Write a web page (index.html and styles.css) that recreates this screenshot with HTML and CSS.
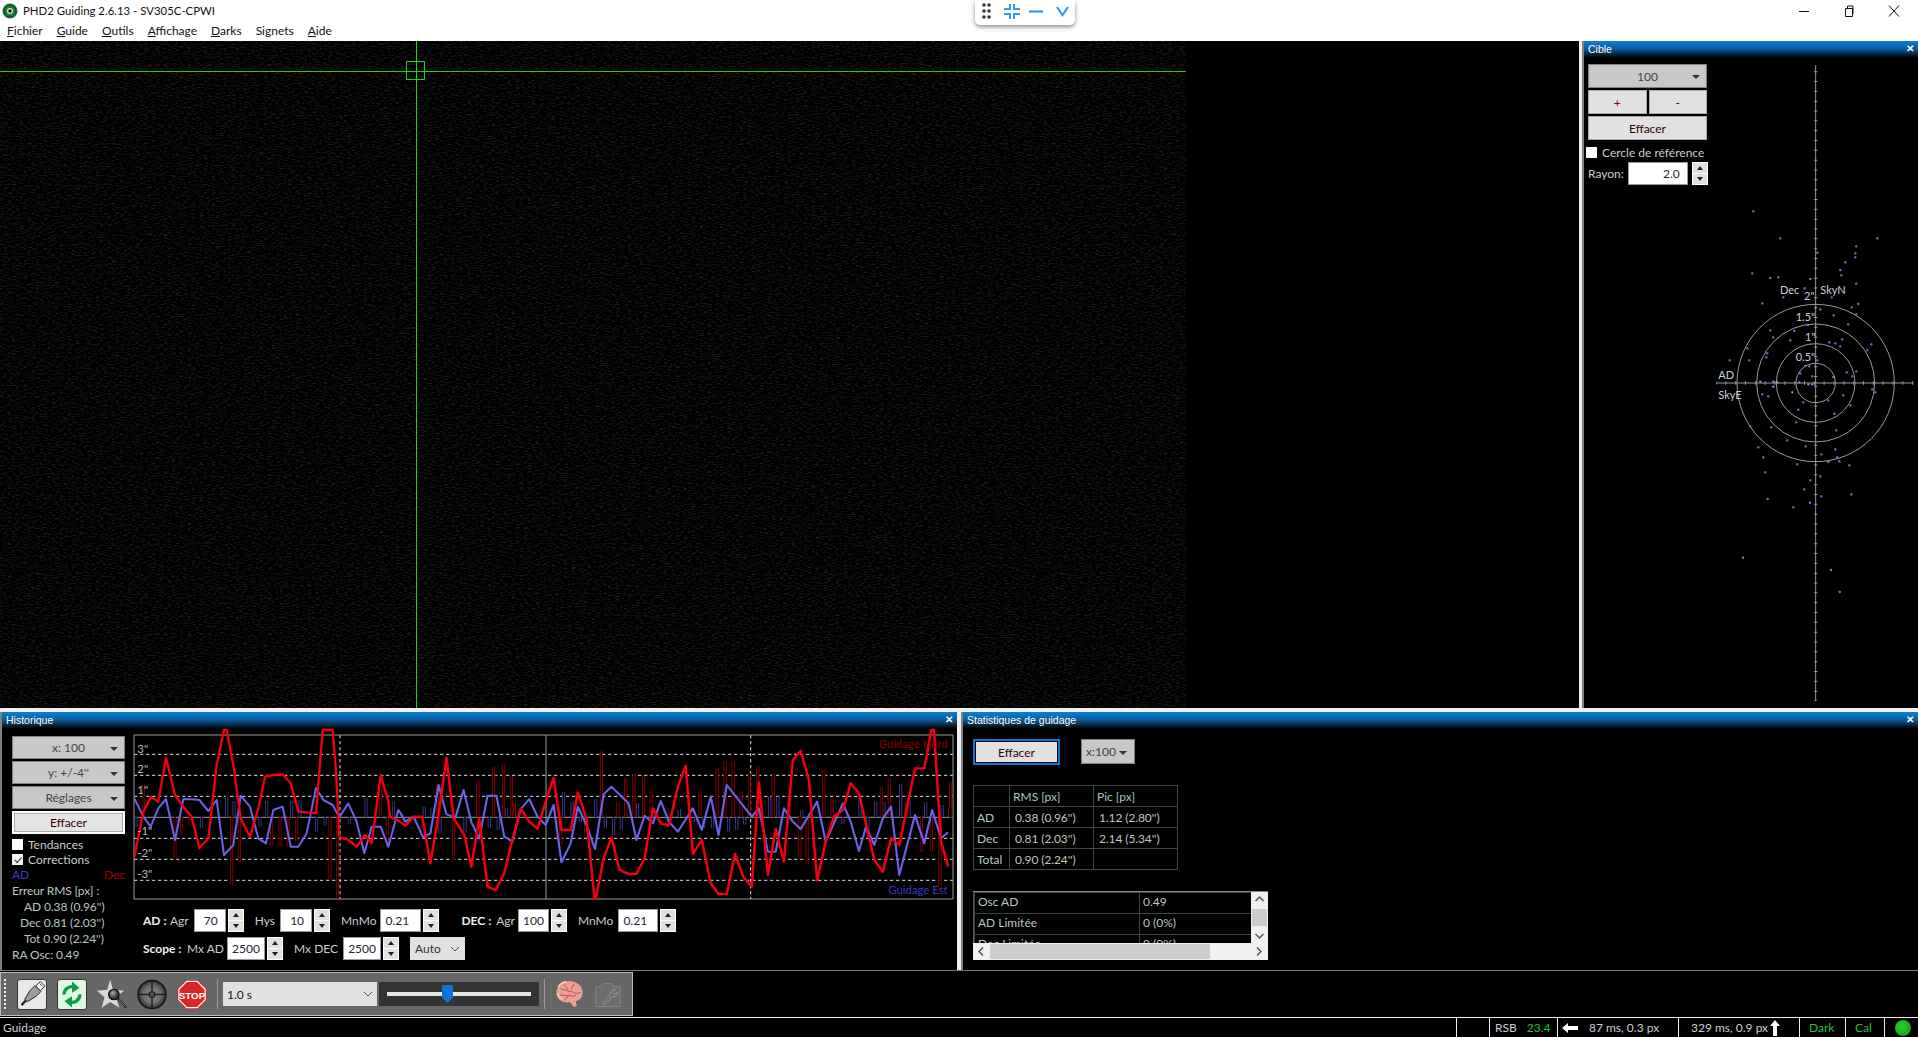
FILE: index.html
```html
<!DOCTYPE html>
<html lang="fr">
<head>
<meta charset="utf-8">
<title>PHD2 Guiding</title>
<link rel="stylesheet" href="styles.css">
</head>
<body>
<div class="app">
  <header class="titlebar">
    <svg class="app-icon" viewBox="0 0 16 16"><circle cx="8" cy="8" r="7.500" fill="#1f7a3a"/><circle cx="8" cy="8" r="6" fill="none" stroke="#0c3d1c"/><circle cx="8" cy="8" r="3" fill="#d8e8d0"/><circle cx="8" cy="8" r="1.700" fill="#111"/></svg>
    <span class="app-title">PHD2 Guiding 2.6.13 - SV305C-CPWI</span>
    <div class="winctl">
      <svg viewBox="0 0 12 12"><path d="M1 6.500h10" stroke="#111"/></svg>
      <svg viewBox="0 0 12 12"><path d="M2.500 3.500h7v8h-7zM4.500 3.500V1h5.500v8h-1" fill="none" stroke="#111"/></svg>
      <svg viewBox="0 0 12 12"><path d="M1 .5l10 11M11 .5l-10 11" fill="none" stroke="#111"/></svg>
    </div>
  </header>
  <div class="floatbar">
    <svg viewBox="0 0 100 24">
      <g fill="#333"><circle cx="9" cy="5" r="1.800"/><circle cx="14" cy="5" r="1.800"/><circle cx="9" cy="11" r="1.800"/><circle cx="14" cy="11" r="1.800"/><circle cx="9" cy="17" r="1.800"/><circle cx="14" cy="17" r="1.800"/></g>
      <path d="M35 4v5h-6M39 4v5h6M35 19v-5h-6M39 19v-5h6" fill="none" stroke="#2f9bf0" stroke-width="2"/>
      <path d="M54 11.500h14" stroke="#2f9bf0" stroke-width="2.200"/>
      <path d="M82 7l5.500 8 5.500-8" fill="none" stroke="#2f9bf0" stroke-width="2.200"/>
    </svg>
  </div>
  <nav class="menubar">
    <span><u>F</u>ichier</span><span><u>G</u>uide</span><span><u>O</u>utils</span><span><u>A</u>ffichage</span><span><u>D</u>arks</span><span>Signets</span><span><u>A</u>ide</span>
  </nav>

  <div class="upper">
    <main class="camera">
      <div class="frame">
        <svg class="crosshair" viewBox="0 0 1186 667">
          <defs>
            <filter id="grain" x="0" y="0" width="100%" height="100%" color-interpolation-filters="sRGB">
              <feTurbulence type="fractalNoise" baseFrequency="0.25 0.9" numOctaves="2" seed="7"/>
              <feColorMatrix type="matrix" values="0.34 0 0 0 -0.15  0.31 0 0 0 -0.14  0.31 0 0 0 -0.14  0 0 0 0 1"/>
            </filter>
          </defs>
          <rect width="1186" height="667" filter="url(#grain)"/>
          <path d="M0 30.500H1186M416.500 0V667M406.500 20.500h18v18h-18z" fill="none" stroke="#19d419"/>
        </svg>
      </div>
    </main>
    <section class="pane target">
      <div class="pane-title"><span>Cible</span><b>✕</b></div>
      <div class="target-body">
        <div class="target-ctl">
          <div class="btn drop tall"><span>100</span></div>
          <div class="btn-row"><div class="btn plain"><span class="plus">+</span></div><div class="btn plain"><span>-</span></div></div>
          <div class="btn plain"><span>Effacer</span></div>
          <label class="chk-row"><i class="chk"></i>Cercle de référence</label>
          <div class="rayon"><span>Rayon:</span><div class="field wide">2.0</div><div class="spin"><i></i><i></i></div></div>
        </div>
        <svg class="target-plot" viewBox="84 -606 630 1950">
          <g stroke="#9a9a9a" fill="none" stroke-width="3">
            <path d="M407 -585V1323M108 369H700"/>
            <circle cx="407" cy="369" r="59"/><circle cx="407" cy="369" r="118"/><circle cx="407" cy="369" r="177"/><circle cx="407" cy="369" r="236"/>
          </g>
          <path class="ticks" d="M407 1323V-585M108 369H700"/>
          <path class="dots" d="M220 -146h0M301 -65h0M592 -65h0M529 -41h0M526 -20h0M526 -8h0M496 7h0M481 30h0M484 46h0M412 -22h0M217 40h0M271 54h0M295 52h0M391 57h0M529 71h0M374 85h0M310 112h0M455 112h0M247 130h0M515 142h0M535 132h0M421 148h0M529 163h0M461 166h0M505 193h0M383 195h0M271 211h0M343 213h0M280 232h0M331 241h0M487 238h0M448 247h0M466 250h0M481 259h0M574 253h0M202 265h0M562 271h0M262 280h0M259 292h0M208 301h0M149 301h0M412 301h0M376 318h0M388 319h0M500 337h0M529 334h0M361 340h0M397 349h0M517 349h0M460 351h0M241 365h0M280 365h0M292 367h0M280 380h0M358 367h0M385 373h0M397 373h0M577 388h0M586 397h0M337 397h0M247 403h0M265 409h0M490 406h0M445 421h0M370 427h0M511 436h0M355 449h0M463 461h0M349 487h0M211 499h0M274 502h0M469 511h0M322 541h0M377 559h0M235 562h0M466 568h0M424 583h0M250 592h0M472 592h0M478 604h0M445 606h0M352 613h0M508 616h0M256 637h0M421 649h0M391 661h0M373 688h0M514 703h0M424 709h0M263 717h0M189 893h0M453 930h0M479 996h0M390 728h0M340 742h0"/>
          <path class="dots-in" d="M220 -146h0M301 -65h0M592 -65h0M529 -41h0M526 -20h0M526 -8h0M496 7h0M481 30h0M484 46h0M412 -22h0M217 40h0M271 54h0M295 52h0M391 57h0M529 71h0M374 85h0M310 112h0M455 112h0M247 130h0M515 142h0M535 132h0M421 148h0M529 163h0M461 166h0M505 193h0M383 195h0M271 211h0M343 213h0M280 232h0M331 241h0M487 238h0M448 247h0M466 250h0M481 259h0M574 253h0M202 265h0M562 271h0M262 280h0M259 292h0M208 301h0M149 301h0M412 301h0M376 318h0M388 319h0M500 337h0M529 334h0M361 340h0M397 349h0M517 349h0M460 351h0M577 388h0M586 397h0M247 403h0M265 409h0M490 406h0M445 421h0M370 427h0M511 436h0M355 449h0M463 461h0M349 487h0M211 499h0M274 502h0M469 511h0M322 541h0M377 559h0M235 562h0M466 568h0M424 583h0M250 592h0M472 592h0M478 604h0M445 606h0M352 613h0M508 616h0M256 637h0M421 649h0M391 661h0M373 688h0M514 703h0M424 709h0M263 717h0M189 893h0M453 930h0M479 996h0M390 728h0M340 742h0"/>
          <g class="tlabel">
            <text x="115" y="356">AD</text><text x="115" y="416">SkyE</text><text x="300" y="101">Dec</text><text x="421" y="101">SkyN</text>
            <text x="372" y="121">2"</text><text x="347" y="183">1.5"</text><text x="375" y="243">1"</text><text x="347" y="302">0.5"</text>
          </g>
        </svg>
      </div>
    </section>
  </div>

  <div class="lower">
    <section class="pane history">
      <div class="pane-title"><span>Historique</span><b>✕</b></div>
      <div class="history-body">
        <div class="hist-left">
          <div class="btn drop"><span>x: 100</span></div>
          <div class="btn drop"><span>y: +/-4''</span></div>
          <div class="btn drop"><span>Réglages</span></div>
          <div class="btn plain bright"><span>Effacer</span></div>
          <label class="chk-row"><i class="chk"></i>Tendances</label>
          <label class="chk-row"><i class="chk on"></i>Corrections</label>
          <div class="ad-dec"><span class="c-blue">AD</span><span class="c-red">Dec</span></div>
          <div class="stat-line">Erreur RMS [px] :</div>
          <div class="stat-line ind-ad">AD&nbsp;0.38 (0.96'')</div>
          <div class="stat-line ind-dec">Dec&nbsp;0.81 (2.03'')</div>
          <div class="stat-line ind-ad">Tot&nbsp;0.90 (2.24'')</div>
          <div class="stat-line">RA Osc: 0.49</div>
        </div>
        <div class="hist-right">
          <svg class="plot" viewBox="399 69 2466 516">
            <defs>
              <path id="barsR1" d="M430 337V240M525 337V465M545 337V385M570 337V360M695 337V540M718 337V470M815 337V420M840 337V425M865 337V425M890 337V410M990 337V525M1013 337V580M1142 337V240M1162 337V430"/>
              <path id="barsB1" d="M408 337V365M605 337V368M680 337V272M702 337V288M780 337V365M800 337V288M875 337V288M900 337V285M950 337V380M975 337V362M1048 337V358M1098 337V278M1180 337V290"/>
              <path id="barsR2" d="M105 337V238M150 337V465M218 337V225M262 337V185M290 337V178M312 337V215M320 337V292M450 337V420M520 337V385M564 337V135M610 337V292M632 337V220M655 337V210M682 337V212M703 337V252M840 337V258M888 337V190M910 337V168M933 337V168M955 337V258M978 337V205M1002 337V183M1045 337V210M1090 337V280M1120 337V462M1140 337V480M1187 337V195M1210 337V278M1348 337V245M1370 337V218M1418 337V278M1460 337V440M1488 337V440M1512 337V550M1542 337V230"/>
              <path id="barsB2" d="M68 337V305M90 337V308M112 337V385M182 337V385M250 337V368M275 337V375M298 337V308M458 337V262M482 337V290M505 337V350M548 337V283M575 337V370M598 337V390M620 337V375M665 337V295M782 337V312M828 337V350M850 337V370M875 337V370M920 337V380M943 337V375M965 337V358M1035 337V275M1058 337V275M1125 337V315M1240 337V358M1288 337V280M1310 337V385M1332 337V290M1355 337V290M1402 337V238M1425 337V288M1472 337V292M1518 337V300M1540 337V310"/>
            </defs>
            <g class="grid-dash"><path d="M402 148H2859M402 211H2859M402 274H2859M402 400H2859M402 463H2859M402 526H2859M1020 90V582M2252 90V582"/></g>
            <path class="grid-solid" d="M402 337H2859M1638 90V582M402 90H2859V582H402Z"/>
            <g class="bar-blue"><use href="#barsB1"/><use href="#barsB2" transform="translate(1200 0) scale(1.0714 1)"/></g>
            <g class="bar-red"><use href="#barsR1"/><use href="#barsR2" transform="translate(1200 0) scale(1.0714 1)"/></g>
            <g class="bar-in"><use href="#barsB1"/><use href="#barsB2" transform="translate(1200 0) scale(1.0714 1)"/><use href="#barsR1"/><use href="#barsR2" transform="translate(1200 0) scale(1.0714 1)"/></g>
            <g class="line-blue">
              <polyline points="403,280 430,335 452,365 475,310 498,282 525,405 550,282 575,283 598,285 625,318 650,285 672,450 700,420 722,272 750,305 775,400 798,415 820,315 848,305 872,425 895,425 920,385 948,248 970,285 998,300 1018,337 1045,295 1070,350 1093,445 1115,365 1142,365 1165,425 1195,315 1200,322"/>
              <polyline transform="translate(1200 0) scale(1.0714 1)" points="0,322 15,350 38,335 65,398 85,385 108,240 130,328 155,338 178,255 200,352 222,400 245,272 270,272 292,395 315,410 338,312 362,282 385,335 408,360 430,300 452,472 478,415 498,305 522,360 546,432 570,268 592,245 640,295 662,405 685,332 708,355 730,288 753,350 778,380 820,310 845,375 870,275 892,390 915,240 985,335 1005,310 1030,440 1052,440 1075,310 1100,350 1122,372 1168,290 1192,410 1240,295 1262,350 1285,438 1305,365 1328,420 1352,340 1375,305 1398,510 1442,330 1468,415 1490,315 1515,400 1535,382"/>
            </g>
            <g class="line-red">
              <polyline points="403,455 430,320 453,275 475,290 498,158 525,270 550,305 575,335 598,430 625,400 650,180 672,75 680,75 700,180 722,340 750,395 775,310 795,215 820,210 848,208 872,235 895,320 920,322 948,325 968,75 998,75 1008,200 1018,397 1045,405 1070,425 1095,390 1115,415 1142,210 1165,290 1170,335 1200,350"/>
              <polyline transform="translate(1200 0) scale(1.0714 1)" points="0,350 15,362 38,335 62,335 85,475 108,330 130,158 150,340 180,390 200,485 222,340 245,545 268,555 292,505 318,390 338,310 362,350 385,372 408,290 430,218 452,375 478,375 498,262 522,340 546,595 570,460 592,398 615,495 640,507 662,507 685,460 708,310 730,355 753,362 778,245 800,182 820,447 845,405 870,535 892,567 915,567 938,447 962,517 985,545 1005,232 1030,510 1052,372 1075,470 1100,165 1122,138 1145,225 1168,527 1192,410 1215,335 1240,315 1262,235 1285,265 1328,465 1352,500 1375,400 1398,420 1442,190 1468,190 1488,75 1495,75 1515,410 1535,485"/>
            </g>
            <g class="plabel">
              <text x="412" y="143">3"</text><text x="412" y="205">2"</text><text x="412" y="268">1"</text><text x="412" y="390">-1"</text><text x="412" y="456">-2"</text><text x="412" y="520">-3"</text>
              <text class="gn" x="2843" y="130">Guidage Nord</text><text class="ge" x="2843" y="568">Guidage Est</text>
            </g>
          </svg>
          <div class="ctl-row r1">
            <b class="lbl-ad">AD :</b><span class="lbl-agr">Agr</span><div class="field">70</div><div class="spin"><i></i><i></i></div>
            <span class="lbl-hys">Hys</span><div class="field">10</div><div class="spin"><i></i><i></i></div>
            <span class="lbl-mn">MnMo</span><div class="field left w41">0.21</div><div class="spin"><i></i><i></i></div>
            <b class="lbl-dec">DEC :</b><span class="lbl-agr2">Agr</span><div class="field w31">100</div><div class="spin"><i></i><i></i></div>
            <span class="lbl-mn2">MnMo</span><div class="field left w40">0.21</div><div class="spin"><i></i><i></i></div>
          </div>
          <div class="ctl-row r2">
            <b class="lbl-sc">Scope :</b><span class="lbl-mx">Mx AD</span><div class="field c38">2500</div><div class="spin"><i></i><i></i></div>
            <span class="lbl-mxd">Mx DEC</span><div class="field c38">2500</div><div class="spin"><i></i><i></i></div>
            <div class="auto"><span>Auto</span><svg viewBox="0 0 10 6"><path d="M1 1l4 4 4-4" fill="none" stroke="#555"/></svg></div>
          </div>
        </div>
      </div>
    </section>
    <section class="pane stats">
      <div class="pane-title"><span>Statistiques de guidage</span><b>✕</b></div>
      <div class="stats-body">
        <div class="stats-top">
          <div class="btn plain focus"><span>Effacer</span></div>
          <div class="btn drop small"><span>x:100</span></div>
        </div>
        <table class="grid g1">
          <tr class="head"><td></td><td>RMS [px]</td><td>Pic [px]</td></tr>
          <tr><td>AD</td><td class="n">0.38 (0.96'')</td><td class="n">1.12 (2.80'')</td></tr>
          <tr><td>Dec</td><td class="n">0.81 (2.03'')</td><td class="n">2.14 (5.34'')</td></tr>
          <tr><td>Total</td><td class="n">0.90 (2.24'')</td><td></td></tr>
        </table>
        <div class="scrollbox">
          <div class="sb-main">
            <div class="sb-view">
              <table class="grid g2">
                <tr><td>Osc AD</td><td>0.49</td></tr>
                <tr><td>AD Limitée</td><td>0 (0%)</td></tr>
                <tr><td>Dec Limitée</td><td>0 (0%)</td></tr>
              </table>
            </div>
            <div class="vbar"><svg viewBox="0 0 17 51"><path d="M4.500 9l4-4 4 4M4.500 42l4 4 4-4" fill="none" stroke="#555" stroke-width="1.500"/><rect x="1" y="17" width="15" height="17" fill="#cdcdcd"/></svg></div>
          </div>
          <div class="hbar"><svg viewBox="0 0 295 17"><path d="M10 4.500l-4 4 4 4M284 4.500l4 4-4 4" fill="none" stroke="#555" stroke-width="1.500"/><rect x="17" y="1" width="220" height="15" fill="#cdcdcd"/></svg></div>
        </div>
      </div>
    </section>
  </div>

  <div class="toolrow">
    <div class="toolbar">
      <i class="grip"></i>
      <div class="tool on-light">
        <svg viewBox="0 0 30 30"><g transform="rotate(45 15 15)"><rect x="11.500" y="-1" width="7" height="7" fill="#f4f4f4" stroke="#222"/><path d="M13 1h1.500M15.500 1H17" stroke="#222"/><path d="M10.500 6h9v7l-2.500 11h-4l-2.500-11z" fill="#9c9c9c" stroke="#222"/><path d="M15 24v7" stroke="#222" stroke-width="2.500"/></g></svg>
      </div>
      <div class="tool on-green">
        <svg viewBox="0 0 30 30"><g fill="none" stroke="#109a4a" stroke-width="3.600"><path d="M6.500 15a8.500 8.500 0 0 1 11-8"/><path d="M23.500 15a8.500 8.500 0 0 1-11 8"/></g><g fill="#109a4a"><path d="M15 1l8 7-8 5zM15 29l-8-7 8-5z"/></g></svg>
      </div>
      <div class="tool">
        <svg viewBox="0 0 32 32"><path d="M14 0l3 11 12 1-9 7 4 11-10-6-9 6 3-11-8-7 11-1z" fill="#d8d8d8"/><defs><radialGradient id="lens" cx=".4" cy=".35"><stop offset="0" stop-color="#aaa"/><stop offset="1" stop-color="#333"/></radialGradient></defs><circle cx="18" cy="16" r="5.500" fill="url(#lens)" stroke="#111" stroke-width="1.500"/><path d="M22 20l9 10" stroke="#111" stroke-width="2"/><path d="M23 21l7 8" stroke="#ccc" stroke-width=".7"/></svg>
      </div>
      <div class="tool">
        <svg viewBox="0 0 32 32"><defs><radialGradient id="scope"><stop offset="0" stop-color="#8a8a8a"/><stop offset=".65" stop-color="#6a6a6a"/><stop offset="1" stop-color="#2e2e2e"/></radialGradient></defs><circle cx="16" cy="16" r="15" fill="url(#scope)" stroke="#111" stroke-width="1.500"/><path d="M16 1v30M1 16h30" stroke="#1c1c1c" stroke-width="1.400"/><circle cx="16" cy="16" r="3" fill="#555" stroke="#1c1c1c" stroke-width="1.200"/></svg>
      </div>
      <div class="tool stop">
        <svg viewBox="0 0 32 32"><defs><linearGradient id="stopg" x1="0" y1="0" x2="1" y2="1"><stop offset="0" stop-color="#c8282a"/><stop offset="1" stop-color="#e8261c"/></linearGradient></defs><path d="M10 .5h12l9.500 9.500v12L22 31.500H10L.5 22V10z" fill="url(#stopg)"/><path d="M10.500 2h11l8.500 8.500v11L21.500 30h-11L2 21.500v-11z" fill="none" stroke="#fff" stroke-width="1.200"/><text x="16" y="20.500" class="stop-text">STOP</text></svg>
      </div>
      <i class="tsep"></i>
      <div class="exposure"><span>1.0 s</span><svg viewBox="0 0 10 6"><path d="M1 1l4 4 4-4" fill="none" stroke="#555"/></svg></div>
      <div class="slider"><i class="thumb"></i></div>
      <i class="tsep"></i>
      <div class="tool brain">
        <svg viewBox="0 0 32 32"><path d="M3 14C3 7 9 2 16 2s14 4 14 12c0 5-3 8-7 9l1 5-3 1-4-5C9 25 3 21 3 14z" fill="#ec9f92"/><path d="M7 10c3 2 5 0 7 2s5 0 7 2 5 0 7 0M6 17c3-2 5 1 8 0s5 2 9 0M11 5c1 3 3 3 4 6M21 5c-1 3-2 4-3 6M12 22c0-3 3-3 4-5" fill="none" stroke="#b8524a" stroke-width="1"/><path d="M5 8c2-3 5-5 8-5M4 15c1 3 3 5 5 6" fill="none" stroke="#fbe0d8" stroke-width="1.200"/></svg>
      </div>
      <div class="tool cam">
        <svg viewBox="0 0 30 30"><path d="M2 7h5l3-4h9l2 4h7v21H2z" fill="#6c6c6c" stroke="#888"/><path d="M9 24l9-9c-1-3 1-6 5-5l-3 3 2 2 3-3c1 4-2 6-5 5l-9 9z" fill="none" stroke="#999"/></svg>
      </div>
    </div>
  </div>

  <footer class="status">
    <span class="st-msg">Guidage</span>
    <div class="st-cell c33"></div>
    <div class="st-cell c68"><span>RSB</span><span class="green">23.4</span></div>
    <div class="st-cell c121"><svg class="arrow-l" viewBox="0 0 16 10"><path d="M0 5l6-5v3h10v4H6v3z" fill="#fff"/></svg><span>87 ms, 0.3 px</span></div>
    <div class="st-cell c121 r"><span>329 ms, 0.9 px</span><svg class="arrow-u" viewBox="0 0 10 16"><path d="M5 0l5 6H7v10H3V6H0z" fill="#fff"/></svg></div>
    <div class="st-cell c46 green">Dark</div>
    <div class="st-cell c39 green">Cal</div>
    <div class="st-cell led"><i></i></div>
  </footer>
</div>
</body>
</html>
```

FILE: styles.css
```css
* { box-sizing: border-box; }
html, body { margin: 0; height: 100%; overflow: hidden; }
body { background: #000; color: #ccc; font: 12px "Lato", "Liberation Sans", sans-serif; }
.app { position: relative; display: flex; flex-direction: column; width: 1918px; height: 1037px; }

.titlebar { display: flex; align-items: center; height: 21px; background: #fff; color: #111; padding-left: 2px; flex: none; }
.app-icon { width: 16px; height: 16px; flex: none; }
.app-title { margin-left: 5px; font-size: 11.400px; }
.winctl { margin-left: auto; display: flex; gap: 33px; padding-right: 18px; }
.winctl svg { width: 12px; height: 12px; }
.floatbar { position: absolute; left: 975px; top: 0; width: 100px; height: 25px; background: #fff; border-radius: 0 0 5px 5px; box-shadow: 0 2px 4px rgba(0,0,0,.45); }
.floatbar svg { display: block; width: 100px; height: 24px; }
.menubar { display: flex; gap: 14px; height: 20px; padding: 2px 0 0 7px; background: #fff; color: #111; flex: none; font-size: 12px; }

.upper { display: flex; height: 667px; background: #f0f0f0; flex: none; }
.camera { width: 1579px; background: #000; flex: none; }
.frame { width: 1186px; height: 667px; background: #000; }
.crosshair { display: block; width: 1186px; height: 667px; }

.pane { background: #000; display: flex; flex-direction: column; min-width: 0; }
.pane-title { display: flex; justify-content: space-between; align-items: center; height: 17px; flex: none; padding: 0 4px 2px 4px; color: #fff; font: 10.500px "Liberation Sans", sans-serif; background: linear-gradient(#0b7fd6, #0a5c9c 45%, #000); }
.pane-title b { font-size: 10px; font-weight: 700; }

.target { width: 336px; margin-left: 3px; border-left: 2px solid #808080; }
.target-body { display: flex; flex: 1; }
.target-ctl { width: 119px; margin: 6px 1px 0 4px; flex: none; display: flex; flex-direction: column; gap: 2px; }
.target-ctl .btn { height: 24px; }
.target-plot { display: block; width: 210px; height: 650px; flex: none; }
.ticks { stroke: #9a9a9a; stroke-width: 10; fill: none; stroke-dasharray: 3 26.500; stroke-dashoffset: 1.500; }
.dots { stroke: #9090ff; stroke-width: 7; stroke-linecap: round; fill: none; }
.dots-in { stroke: #000; stroke-width: 2; stroke-linecap: round; fill: none; }
.tlabel text { fill: #c6d0da; font: 33px "Lato", sans-serif; }

.btn { display: flex; align-items: center; justify-content: center; height: 23px; position: relative; color: #333; font-size: 12px; }
.btn.drop { background: #c8c8c8; border: 1px solid #808080; color: #444; }
.btn.drop::after { content: ""; position: absolute; right: 6px; top: 10px; border: 4px solid transparent; border-top: 4px solid #333; }
.btn.plain { background: #e1e1e1; border: 1px solid #aaa; color: #300; }
.btn-row { display: flex; gap: 2px; }
.btn-row .btn { flex: 1; }
.plus { color: #800; }
.chk-row { display: flex; align-items: center; gap: 5px; font-size: 12px; color: #c6d0d0; height: 15px; }
.target-ctl .chk-row { margin-top: 3px; }
.chk { width: 11px; height: 11px; background: #fff; flex: none; margin-left: -2px; }
.chk.on { background: #f0f0f0; position: relative; }
.chk.on::after { content: ""; position: absolute; left: 2px; top: 1px; width: 6px; height: 3px; border-left: 1px solid #333; border-bottom: 1px solid #333; transform: rotate(-45deg) translate(-1px, 2px); }
.rayon { display: flex; align-items: center; margin-top: 0; gap: 2px; }
.rayon > span { width: 39px; margin-right: 2px; }
.field { display: flex; align-items: center; justify-content: flex-end; width: 32px; height: 23px; padding: 0 7px 0 2px; background: #fff; border: 1px solid #999; color: #223; font-size: 12px; flex: none; }
.field.wide { width: 60px; }
.field.left { justify-content: flex-start; width: 38px; padding-left: 4px; }
.field.w41 { width: 41px; }
.field.w40 { width: 40px; }
.field.w31 { width: 31px; padding-right: 4px; }
.field.c38 { width: 38px; justify-content: center; padding: 0; }
.spin { width: 16px; height: 23px; display: flex; flex-direction: column; gap: 1px; flex: none; margin-left: 2px; background: #fff; padding: 1px; }
.spin i { flex: 1; background: #e1e1e1; display: flex; align-items: center; justify-content: center; }
.spin i::before { content: ""; border: 3px solid transparent; border-bottom: 4px solid #222; border-top: 0; }
.spin i + i::before { border-top: 4px solid #222; border-bottom: 0; }

.lower { display: flex; height: 262px; padding-top: 4px; background: #f0f0f0; flex: none; }
.history { width: 957px; flex: none; border-left: 2px solid #808080; }
.history-body { display: flex; flex: 1; }
.hist-left { width: 113px; margin: 7px 8px 0 10px; flex: none; display: flex; flex-direction: column; gap: 2px; }
.btn.bright { background: #e4e4e4; border: 2px solid #fff; height: 23px; box-shadow: inset 0 0 0 1px #aaa; }
.hist-left .chk-row { height: 13px; margin-top: 0; }
.hist-left .chk { margin-left: 0; }
.hist-left .chk-row:first-of-type { margin-top: 2px; }
.ad-dec { display: flex; justify-content: space-between; height: 14px; margin-top: -1px; }
.c-blue { color: #3a3ac8; }
.c-red { color: #a00000; }
.stat-line { height: 14px; color: #b8c8c0; white-space: nowrap; letter-spacing: -.1px; }
.ind-ad { padding-left: 12px; }
.ind-dec { padding-left: 8px; }
.hist-right { flex: 1; min-width: 0; }
.plot { display: block; width: 822px; height: 172px; margin-top: -1px; }
.grid-dash { stroke: #ddd; stroke-width: 3; stroke-dasharray: 10 8; fill: none; }
.grid-solid { stroke: #9a9a9a; stroke-width: 3; fill: none; }
.bar-blue { stroke: #3d3d90; stroke-width: 9; fill: none; }
.bar-red { stroke: #8a0000; stroke-width: 9; fill: none; }
.bar-in { stroke: #000; stroke-width: 4; fill: none; }
.line-blue polyline { stroke: #6a62e8; stroke-width: 6; fill: none; stroke-linejoin: round; }
.line-red polyline { stroke: #f00010; stroke-width: 7; fill: none; stroke-linejoin: round; }
.plabel text { fill: #b0b8c0; font: 34px "Lato", sans-serif; }
.plabel .gn { fill: #8a0000; text-anchor: end; }
.plabel .ge { fill: #3a3ac0; text-anchor: end; }

.ctl-row { display: flex; align-items: center; height: 23px; margin-left: 10px; }
.ctl-row.r1 { margin-top: 9px; }
.ctl-row.r2 { margin-top: 5px; }
.ctl-row b { color: #f0f0f0; font-weight: 700; white-space: nowrap; }
.lbl-agr { margin: 0 5px; }
.lbl-agr2 { margin: 0 3px 0 5px; }
.lbl-ad { width: 22px; }
.lbl-hys { margin: 0 5px 0 11px; }
.lbl-mn { margin: 0 4px 0 11px; }
.lbl-dec { margin-left: 22px; }
.lbl-mn2 { margin: 0 5px 0 11px; }
.lbl-sc { width: 44px; }
.lbl-mx { width: 40px; }
.lbl-mxd { margin: 0 5px 0 11px; }
.auto { display: flex; align-items: center; justify-content: space-between; width: 55px; height: 23px; margin-left: 11px; padding: 0 5px; background: #e1e1e1; color: #333; }
.auto svg { width: 10px; height: 6px; }

.stats { flex: 1; margin-left: 4px; border-left: 2px solid #808080; }
.stats-body { padding: 10px 0 0 10px; }
.stats-top { display: flex; gap: 21px; }
.btn.focus { width: 87px; height: 26px; border: 2px solid #0a78d0; box-shadow: inset 0 0 0 1px #000; }
.btn.small { width: 54px; height: 25px; justify-content: flex-start; padding-left: 4px; }
.btn.small::after { top: 11px; right: 7px; }
.grid { border-collapse: collapse; color: #b8c8c8; font-size: 12px; table-layout: fixed; }
.grid td { border: 1px solid #444; height: 21px; padding: 0 3px; white-space: nowrap; overflow: hidden; }
.g1 { margin-top: 20px; width: 205px; border: 1px solid #666; }
.g1 td:first-child { width: 36px; }
.g1 td:nth-child(2), .g1 td:nth-child(3) { width: 84px; }
.g1 .n { padding-left: 5px; color: #c0c8b8; letter-spacing: -.1px; }
.g1 .head td { color: #a8c8c0; }
.scrollbox { width: 295px; height: 69px; margin-top: 21px; display: flex; flex-direction: column; border-top: 1px solid #888; }
.sb-main { display: flex; height: 51px; flex: none; }
.sb-view { flex: 1; overflow: hidden; border-left: 1px solid #555; }
.g2 { width: 278px; }
.g2 td { padding: 0 3px 3px; }
.g2 td:first-child { width: 165px; }
.vbar { width: 17px; height: 51px; background: #f0f0f0; flex: none; }
.hbar { height: 17px; background: #f0f0f0; }
.vbar svg, .hbar svg { display: block; width: 100%; height: 100%; }

.toolrow { height: 47px; flex: none; border-top: 1px solid #777; padding-top: 1px; }
.toolbar { display: flex; align-items: center; width: 633px; height: 44px; background: #666; border: 1px solid #bbb; padding-left: 3px; }
.grip { width: 2px; height: 30px; margin-right: 11px; border-left: 2px dotted #eee; flex: none; }
.tool { width: 30px; height: 31px; flex: none; margin-right: 10px; display: flex; align-items: center; justify-content: center; border-radius: 3px; }
.tool svg { display: block; width: 100%; height: 100%; }
.on-light { background: #e8e8e8; border: 1px solid #333; }
.on-green { background: #dff8e4; border: 1px solid #333; }
.stop-text { fill: #fff; font: 700 10.500px "Liberation Sans", sans-serif; text-anchor: middle; }
.tsep { width: 1px; height: 30px; background: #999; flex: none; margin-right: 5px; }
.exposure { display: flex; align-items: center; justify-content: space-between; width: 154px; height: 24px; padding: 0 4px; background: #e1e1e1; color: #111; flex: none; }
.exposure svg { width: 10px; height: 6px; }
.slider { width: 160px; height: 24px; margin: 0 5px 0 2px; background: #333; flex: none; position: relative; }
.slider::before { content: ""; position: absolute; left: 8px; right: 8px; top: 10px; height: 4px; background: #e6e6e6; }
.thumb { position: absolute; left: 63px; top: 3px; width: 11px; height: 18px; background: #0a74da; clip-path: polygon(0 0, 100% 0, 100% 70%, 50% 100%, 0 70%); }
.tool.brain { width: 32px; margin-left: 3px; margin-right: 9px; }
.tool.cam { width: 28px; margin-right: 0; }

.status { display: flex; align-items: stretch; height: 20px; flex: none; border-top: 1px solid #eee; color: #c8d0d8; font-size: 12px; }
.st-msg { width: 1456px; padding: 2px 0 0 3px; flex: none; }
.st-cell { display: flex; align-items: center; border-left: 1px solid #eee; flex: none; padding-left: 5px; gap: 10px; }
.c33 { width: 33px; }
.c68 { width: 68px; }
.c121 { width: 121px; padding-left: 4px; gap: 11px; }
.c121.r { gap: 2px; padding-left: 12px; }
.c46 { width: 46px; padding-left: 9px; }
.c39 { width: 39px; padding-left: 9px; }
.green { color: #2cc02c; }
.arrow-l { width: 16px; height: 10px; }
.arrow-u { width: 10px; height: 16px; }
.led { width: 34px; padding-left: 10px; }
.led i { width: 16px; height: 16px; border-radius: 50%; background: radial-gradient(circle at 40% 40%, #2ed02e, #0a960a); }
```
